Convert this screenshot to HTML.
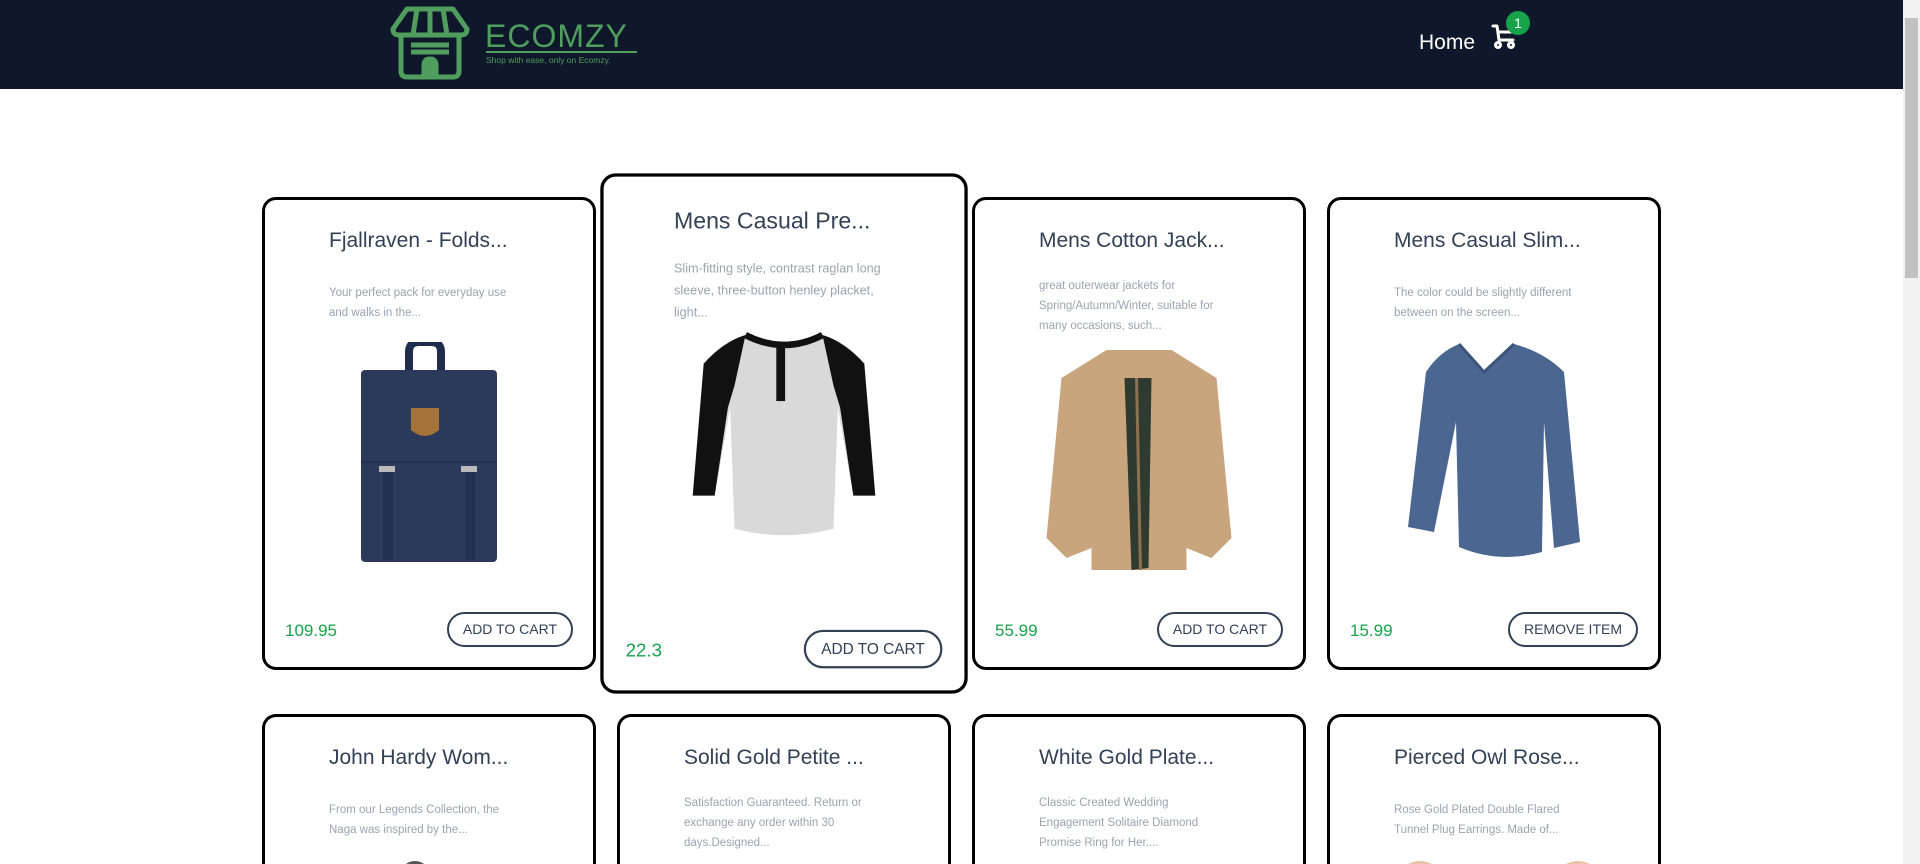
<!DOCTYPE html>
<html><head><meta charset="utf-8">
<style>
*{box-sizing:border-box;margin:0;padding:0}
html,body{width:1920px;height:864px;overflow:hidden;background:#fff;font-family:"Liberation Sans",sans-serif}
#root{position:relative;width:1920px;height:864px;overflow:hidden}
.nav{position:absolute;left:0;top:0;width:1903px;height:89px;background:#0f172a}
.sb{position:absolute;right:0;top:0;width:17px;height:864px;background:#f1f1f1}
.sb .th{position:absolute;left:2px;top:18px;width:13px;height:260px;background:#c1c1c1}
.card{position:absolute;width:334px;height:473px;border:3px solid #000;border-radius:14px;background:#fff}
.t{position:absolute;left:64px;top:29px;font-size:21px;color:#334155;white-space:nowrap}
.d{position:absolute;left:64px;width:192px;font-size:11.5px;line-height:20px;color:#9ca3af}
.img{position:absolute;left:50%;transform:translateX(-50%)}
.p{position:absolute;left:20px;top:421px;font-size:17px;color:#16a34a}
.b{position:absolute;right:20px;top:412px;height:35px;padding:0 14px;border:2px solid #334155;border-radius:18px;font-size:14px;color:#334155;line-height:31px;white-space:nowrap}
.c2{transform:scale(1.1)}
.r2{height:153px;top:714px;border-bottom:none;border-bottom-left-radius:0;border-bottom-right-radius:0;overflow:hidden}
</style></head><body><div id="root">
<div class="nav">
 <svg style="position:absolute;left:387px;top:5px" width="86" height="76" viewBox="0 0 86 76" fill="none" stroke="#4f9e5d" stroke-width="5" stroke-linejoin="round">
  <path d="M20 4 H66 L80 24 Q80 30 74 30 H12 Q6 30 6 24 Z"/>
  <path d="M30 4 L26 30 M43 4 V30 M56 4 L60 30"/>
  <path d="M14 30 V66 Q14 72 20 72 H66 Q72 72 72 66 V30"/>
  <path d="M24 40 H62 M24 47 H62"/>
  <path d="M37 72 V60 Q37 54 43 54 Q49 54 49 60 V72" fill="#4f9e5d"/>
 </svg>
 <div style="position:absolute;left:485px;top:18px;font-size:32px;color:#4f9e5d;letter-spacing:1px;font-weight:300">ECOMZY</div>
 <div style="position:absolute;left:486px;top:51px;width:151px;height:2px;background:#4f9e5d"></div>
 <div style="position:absolute;left:486px;top:55px;font-size:8.5px;color:#4f9e5d">Shop with ease, only on Ecomzy.</div>
 <div style="position:absolute;left:1419px;top:31px;font-size:21px;color:#fff">Home</div>
 <svg style="position:absolute;left:1491px;top:22px" width="26" height="28" viewBox="0 0 26 28" fill="none" stroke="#fff" stroke-width="3" stroke-linecap="round" stroke-linejoin="round">
  <path d="M2 4 H6 L8 18 H22 M7 10 H22"/>
  <circle cx="7" cy="23" r="2.5"/><circle cx="20" cy="23" r="2.5"/>
 </svg>
 <div style="position:absolute;left:1506px;top:11px;width:24px;height:24px;border-radius:50%;background:#16a34a;color:#fff;font-size:14px;text-align:center;line-height:24px">1</div>
</div>
<div class="sb"><div class="th"></div></div>

<div class="card" style="left:262px;top:197px">
 <div class="t">Fjallraven - Folds...</div>
 <div class="d" style="top:83px">Your perfect pack for everyday use and walks in the...</div>
 <svg class="img" style="top:142px" width="160" height="228" viewBox="0 0 160 228">
  <path d="M60 30 V10 Q60 0 70 0 H82 Q92 0 92 10 V30" stroke="#1f2d4d" stroke-width="8" fill="none"/>
  <rect x="12" y="28" width="136" height="192" rx="4" fill="#2b3a5a"/>
  <path d="M12 120 L148 120" stroke="#233150" stroke-width="2"/>
  <path d="M62 66 H90 V88 Q76 100 62 88 Z" fill="#a4733a"/>
  <rect x="34" y="128" width="10" height="90" fill="#233150"/><rect x="116" y="128" width="10" height="90" fill="#233150"/>
  <rect x="30" y="124" width="16" height="6" fill="#bbb"/><rect x="112" y="124" width="16" height="6" fill="#bbb"/>
 </svg>
 <div class="p">109.95</div><div class="b">ADD TO CART</div>
</div>

<div class="card c2" style="left:617px;top:197px">
 <div class="t">Mens Casual Pre...</div>
 <div class="d" style="top:74px">Slim-fitting style, contrast raglan long sleeve, three-button henley placket, light...</div>
 <svg class="img" style="top:140px" width="170" height="190" viewBox="0 0 170 190">
  <path d="M50 4 Q30 10 12 30 L2 150 L22 150 L36 70 L40 180 Q85 192 130 180 L134 70 L148 150 L168 150 L158 30 Q140 10 120 4 Q85 20 50 4Z" fill="#d9d9d9"/>
  <path d="M50 4 Q30 10 12 30 L2 150 L22 150 L34 70 L40 50 Z" fill="#111"/>
  <path d="M120 4 Q140 10 158 30 L168 150 L148 150 L136 70 L130 50 Z" fill="#111"/>
  <path d="M50 4 Q85 22 120 4" stroke="#111" stroke-width="6" fill="none"/>
  <rect x="78" y="14" width="8" height="50" fill="#111"/>
 </svg>
 <div class="p">22.3</div><div class="b">ADD TO CART</div>
</div>

<div class="card" style="left:972px;top:197px">
 <div class="t">Mens Cotton Jack...</div>
 <div class="d" style="top:76px">great outerwear jackets for Spring/Autumn/Winter, suitable for many occasions, such...</div>
 <svg class="img" style="top:148px" width="205" height="222" viewBox="0 0 205 222">
  <path d="M70 2 L135 2 L180 30 L195 190 L175 210 L150 200 L150 222 L55 222 L55 200 L30 210 L10 190 L25 30 Z" fill="#c9a57d"/>
  <path d="M88 30 L115 30 L112 220 L95 222 Z" fill="#2f3a30"/>
  <path d="M100 30 L104 222" stroke="#8c7152" stroke-width="3"/>
 </svg>
 <div class="p">55.99</div><div class="b">ADD TO CART</div>
</div>

<div class="card" style="left:1327px;top:197px">
 <div class="t">Mens Casual Slim...</div>
 <div class="d" style="top:83px">The color could be slightly different between on the screen...</div>
 <svg class="img" style="top:142px" width="180" height="224" viewBox="0 0 180 224">
  <path d="M55 2 L80 30 L110 2 Q140 10 160 30 L176 200 L150 206 L140 80 L138 210 Q95 222 55 205 L52 80 L30 190 L4 185 L22 30 Q35 10 55 2Z" fill="#4b6690"/>
  <path d="M55 2 L80 30 L110 2" stroke="#3c5479" stroke-width="3" fill="none"/>
 </svg>
 <div class="p">15.99</div><div class="b">REMOVE ITEM</div>
</div>

<div class="card r2" style="left:262px">
 <div class="t">John Hardy Wom...</div>
 <div class="d" style="top:83px">From our Legends Collection, the Naga was inspired by the...</div>
 <div style="position:absolute;left:135px;top:144px;width:30px;height:30px;border-radius:50%;background:#555"></div>
</div>
<div class="card r2" style="left:617px">
 <div class="t">Solid Gold Petite ...</div>
 <div class="d" style="top:76px">Satisfaction Guaranteed. Return or exchange any order within 30 days.Designed...</div>
</div>
<div class="card r2" style="left:972px">
 <div class="t">White Gold Plate...</div>
 <div class="d" style="top:76px">Classic Created Wedding Engagement Solitaire Diamond Promise Ring for Her....</div>
</div>
<div class="card r2" style="left:1327px">
 <div class="t">Pierced Owl Rose...</div>
 <div class="d" style="top:83px">Rose Gold Plated Double Flared Tunnel Plug Earrings. Made of...</div>
 <div style="position:absolute;left:70px;top:144px;width:40px;height:30px;border-radius:50%;background:#e8c4a8"></div>
 <div style="position:absolute;left:228px;top:144px;width:40px;height:30px;border-radius:50%;background:#e8c4a8"></div>
</div>
</div></body></html>
